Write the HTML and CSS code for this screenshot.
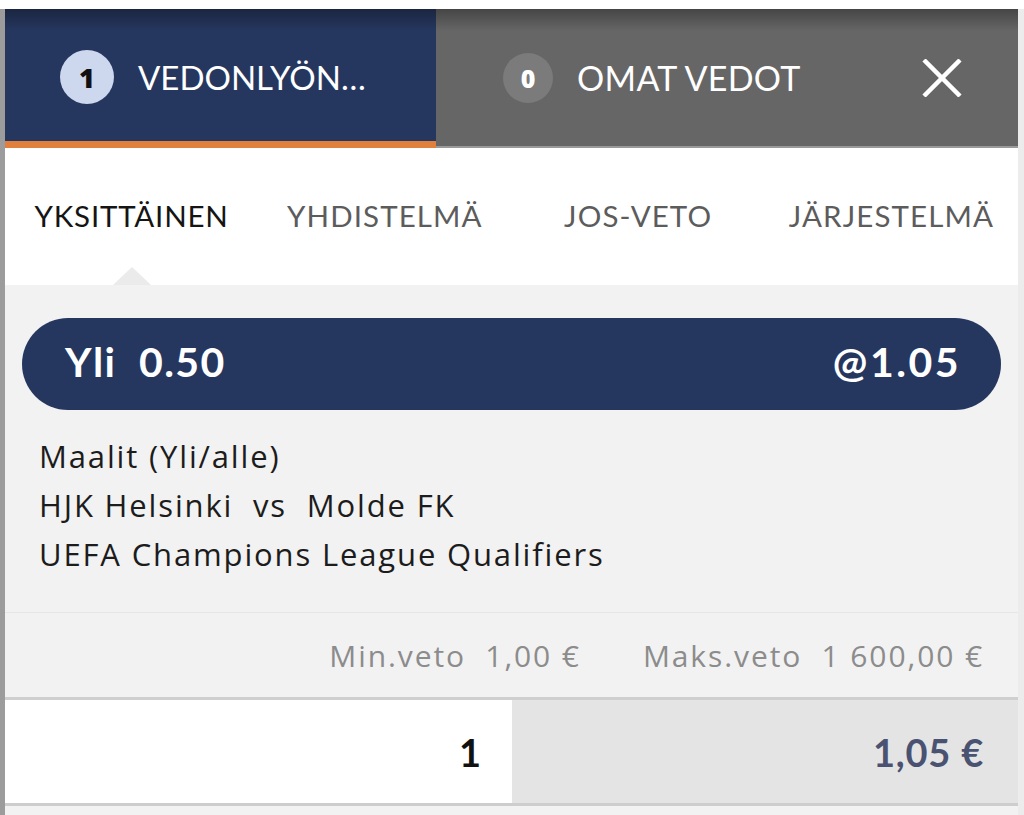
FILE: index.html
```html
<!DOCTYPE html>
<html lang="fi">
<head>
<meta charset="utf-8">
<title>Vetokuponki</title>
<link rel="stylesheet" href="styles.css">
</head>
<body>
<div class="panel">
  <div class="header">
    <div class="tab tab-active">
      <span class="badge badge-light">1</span>
      <span class="tab-label">VEDONLYÖN…</span>
    </div>
    <div class="tab tab-muted">
      <span class="badge badge-dark">0</span>
      <span class="tab-label">OMAT VEDOT</span>
      <button class="close" aria-label="Sulje">
        <svg width="40" height="38" viewBox="0 0 40 38"><path d="M2 1 L38 37 M38 1 L2 37" stroke="#fff" stroke-width="4.5" fill="none"/></svg>
      </button>
    </div>
  </div>
  <div class="subtabs">
    <div class="subtab subtab-active">YKSITTÄINEN</div>
    <div class="subtab">YHDISTELMÄ</div>
    <div class="subtab">JOS-VETO</div>
    <div class="subtab">JÄRJESTELMÄ</div>
  </div>
  <div class="content">
    <div class="pill">
      <span class="pick">Yli&nbsp; 0.50</span>
      <span class="odds">@1.05</span>
    </div>
    <div class="info">
      <div>Maalit (Yli/alle)</div>
      <div>HJK Helsinki &nbsp;vs &nbsp;Molde FK</div>
      <div>UEFA Champions League Qualifiers</div>
    </div>
    <div class="limits">
      <span>Min.veto&nbsp; 1,00 €</span>
      <span>Maks.veto&nbsp; 1 600,00 €</span>
    </div>
    <div class="stake">
      <div class="stake-input">1</div>
      <div class="stake-win">1,05 €</div>
    </div>
  </div>
</div>
</body>
</html>
```
FILE: styles.css
```css
html, body {
  margin: 0;
  padding: 0;
  background: #ffffff;
}
body {
  font-family: "Lato", "Open Sans", sans-serif;
  height: 815px;
  overflow: hidden;
}
.panel {
  margin-top: 9px;
  border-left: 5px solid #9c9c9c;
  border-right: 6px solid #ececec;
  height: 806px;
  background: #ececec;
  display: flex;
  flex-direction: column;
}
.header {
  display: flex;
  height: 139px;
  position: relative;
  flex: none;
}
.header::after {
  content: "";
  position: absolute;
  left: 0; right: 0; top: 0;
  height: 22px;
  background: linear-gradient(rgba(0,0,0,0.32), rgba(0,0,0,0));
  pointer-events: none;
}
.tab {
  display: flex;
  align-items: center;
  box-sizing: border-box;
  color: #fff;
}
.tab-active {
  width: 431px;
  background: #26375f;
  border-bottom: 7px solid #e0803c;
  box-shadow: 0 2px 0 #8a8a8a;
  padding: 4px 0 0 55px;
}
.tab-muted {
  flex: 1;
  background: #666666;
  border-bottom: 2px solid #9a9a9a;
  padding: 0 56px 0 67px;
}
.badge {
  width: 54px;
  height: 54px;
  border-radius: 50%;
  display: flex;
  align-items: center;
  justify-content: center;
  font-family: "Open Sans", sans-serif;
  font-weight: 800;
  font-size: 27px;
  flex: none;
}
.badge-light {
  background: #cdd7ee;
  color: #111;
}
.badge-dark {
  width: 50px;
  height: 50px;
  background: #7b7b7b;
  color: #fff;
  font-size: 25px;
}
.tab-active .tab-label { margin-left: 24px; }
.tab-muted .tab-label { margin-left: 24px; flex: 1; }
.tab-label {
  font-family: "Lato", sans-serif;
  font-weight: 400;
  font-size: 33px;
}
.tab-muted .tab-label { font-size: 34px; letter-spacing: 0.3px; }
.close {
  background: none;
  border: 0;
  padding: 0;
  display: flex;
  cursor: pointer;
}
.subtabs {
  display: flex;
  height: 137px;
  background: #ffffff;
  position: relative;
  flex: none;
}
.subtab {
  flex: 1;
  display: flex;
  align-items: center;
  justify-content: center;
  font-family: "Lato", sans-serif;
  font-size: 29.5px;
  letter-spacing: 1.1px;
  color: #5c5c5c;
  padding-bottom: 2px;
  position: relative;
}
.subtab-active { color: #151515; letter-spacing: 0.8px; }
.subtab-active::after {
  content: "";
  position: absolute;
  bottom: 0;
  left: 50%;
  margin-left: -19px;
  border-left: 19px solid transparent;
  border-right: 19px solid transparent;
  border-bottom: 18px solid #ebebeb;
}
.content {
  flex: 1;
  background: #f2f2f2;
  display: flex;
  flex-direction: column;
}
.pill {
  margin: 33px 17px 0 17px;
  height: 92px;
  flex: none;
  box-sizing: border-box;
  border-radius: 46px;
  background: #26375f;
  color: #fff;
  display: flex;
  align-items: center;
  justify-content: space-between;
  padding: 0 42px 6px 43px;
  font-family: "Lato", sans-serif;
  font-weight: 700;
  font-size: 41px;
  letter-spacing: 1.4px;
}
.odds { letter-spacing: 2.5px; margin-right: -2px; }
.info {
  padding: 22px 0 0 34px;
  font-family: "Open Sans", sans-serif;
  font-size: 31px;
  letter-spacing: 1.85px;
  line-height: 49px;
  color: #1c1c1c;
  height: 203px;
  flex: none;
  box-sizing: border-box;
  border-bottom: 1px solid #e6e6e6;
}
.limits {
  height: 84px;
  flex: none;
  display: flex;
  justify-content: flex-end;
  align-items: center;
  gap: 62px;
  padding-right: 34px;
  font-family: "Open Sans", sans-serif;
  font-size: 30px;
  letter-spacing: 1.9px;
  color: #8c8c8c;
  border-bottom: 3px solid #cfcfcf;
}
.stake {
  display: flex;
  height: 103px;
  flex: none;
  border-bottom: 3px solid #cdcdcd;
}
.stake-input {
  width: 507px;
  background: #fff;
  display: flex;
  align-items: center;
  justify-content: flex-end;
  padding-right: 31px;
  box-sizing: border-box;
  font-family: "Lato", sans-serif;
  font-weight: 700;
  font-size: 38px;
  color: #111;
}
.stake-win {
  flex: 1;
  background: #e4e4e4;
  display: flex;
  align-items: center;
  justify-content: flex-end;
  padding-right: 34px;
  font-family: "Lato", sans-serif;
  font-weight: 700;
  font-size: 38px;
  letter-spacing: 0.8px;
  color: #4a5272;
}
```
